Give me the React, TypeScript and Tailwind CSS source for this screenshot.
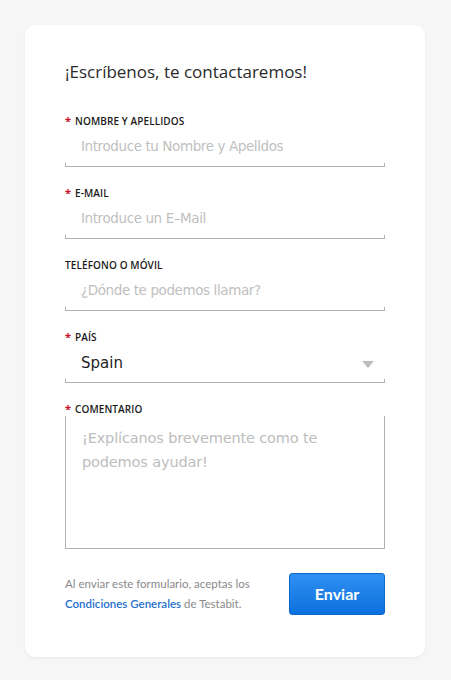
import React from "react";

function Label({ text, required = true }: { text: string; required?: boolean }) {
  return (
    <div className="flex items-center h-[14px] leading-[14px] text-[10px] font-semibold text-[#1a1a1a] tracking-[0.01em] uppercase">
      {required && <span className="text-[#c8102e] w-[10px] text-[11px] font-bold">*</span>}
      <span>{text}</span>
    </div>
  );
}

function Field({ label, placeholder, required = true }: { label: string; placeholder: string; required?: boolean }) {
  return (
    <div className="flex flex-col mb-[19px]">
      <Label text={label} required={required} />
      <div className="flex flex-col h-[39px]">
        <div className="flex-1 flex items-center pl-[16px] pt-[1px] text-[13.5px] text-[#c0c0c0]" style={{ fontFamily: '"DejaVu Sans", sans-serif', letterSpacing: "-0.03em" }}>
          {placeholder}
        </div>
        <div className="h-[4px] border-x border-b border-[#b2b2b2]" />
      </div>
    </div>
  );
}

export default function App() {
  return (
    <div className="min-h-[680px] bg-[#f6f6f6] pt-[25px] px-[25px]" style={{ fontFamily: '"Open Sans", sans-serif' }}>
      <div className="w-[400px] h-[632px] bg-white rounded-[10px] shadow-[0_1px_3px_rgba(0,0,0,0.06)] pt-[35px] px-[40px]">
        <h1 className="h-[24px] leading-[24px] text-[17px] text-[#2a2a2a] font-normal mb-[30px]">
          ¡Escríbenos, te contactaremos!
        </h1>
        <Field label="Nombre y Apellidos" placeholder="Introduce tu Nombre y Apelldos" />
        <Field label="E-Mail" placeholder="Introduce un E–Mail" />
        <Field label="Teléfono o Móvil" placeholder="¿Dónde te podemos llamar?" required={false} />
        <div className="flex flex-col mb-[19px]">
          <Label text="País" />
          <div className="flex flex-col h-[39px]">
            <div className="flex-1 flex items-center justify-between pl-[16px] pr-[11px] pt-[3px] text-[15px] text-[#222]" style={{ fontFamily: '"DejaVu Sans", sans-serif' }}>
              <span>Spain</span>
              <svg width="12" height="7" viewBox="0 0 12 7" className="mt-[2px]">
                <path d="M0 0 H12 L6 7 Z" fill="#bdbdbd" />
              </svg>
            </div>
            <div className="h-[4px] border-x border-b border-[#b2b2b2]" />
          </div>
        </div>
        <div className="flex flex-col">
          <Label text="Comentario" />
          <div className="h-[133px] border border-t-0 border-[#b2b2b2] pl-[16px] pr-[40px] pt-[10px] text-[14.5px] leading-[24px] text-[#bdbdbd]" style={{ fontFamily: '"DejaVu Sans", sans-serif', letterSpacing: "-0.01em" }}>
            ¡Explícanos brevemente como te podemos ayudar!
          </div>
        </div>
        <div className="flex items-center justify-between mt-[24px]">
          <div className="text-[11.5px] leading-[20px] text-[#8a8a8a]" style={{ fontFamily: 'Lato, sans-serif' }}>
            <div>Al enviar este formulario, aceptas los</div>
            <div>
              <span className="text-[#1f6fcc] font-semibold">Condiciones Generales</span> de Testabit.
            </div>
          </div>
          <button className="w-[96px] h-[42px] rounded-[3px] bg-gradient-to-b from-[#2e90f1] to-[#0a71df] border border-[#0b67c8] text-white text-[16px] font-bold" style={{ fontFamily: 'Lato, sans-serif' }}>
            Enviar
          </button>
        </div>
      </div>
    </div>
  );
}
